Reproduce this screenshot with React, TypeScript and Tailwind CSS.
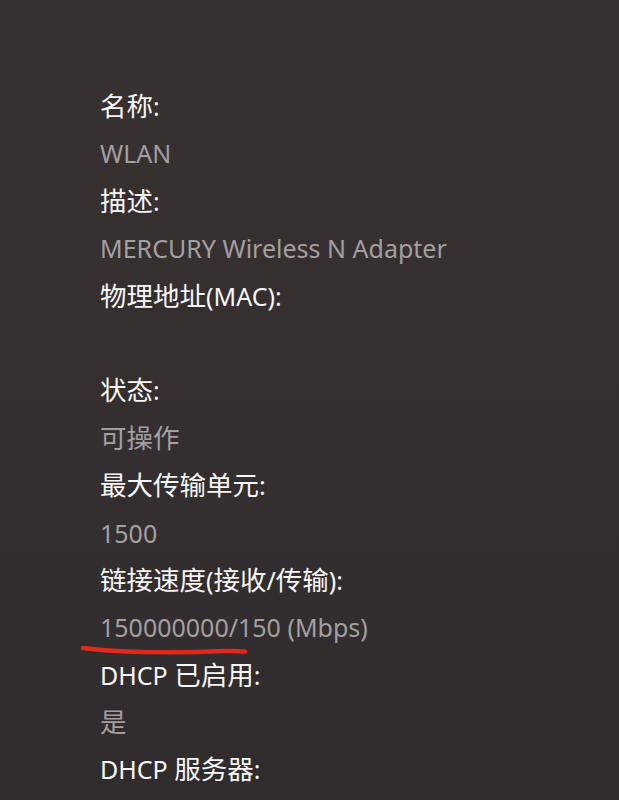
const rows: { text: string; kind: "label" | "value" | "blank" }[] = [
  { text: "名称:", kind: "label" },
  { text: "WLAN", kind: "value" },
  { text: "描述:", kind: "label" },
  { text: "MERCURY Wireless N Adapter", kind: "value" },
  { text: "物理地址(MAC):", kind: "label" },
  { text: "", kind: "blank" },
  { text: "状态:", kind: "label" },
  { text: "可操作", kind: "value" },
  { text: "最大传输单元:", kind: "label" },
  { text: "1500", kind: "value" },
  { text: "链接速度(接收/传输):", kind: "label" },
  { text: "150000000/150 (Mbps)", kind: "value" },
  { text: "DHCP 已启用:", kind: "label" },
  { text: "是", kind: "value" },
  { text: "DHCP 服务器:", kind: "label" },
];

// CJK glyphs in the screenshot run a bit larger than the latin ones
function Runs({ text }: { text: string }) {
  const parts = text.match(/[\u4e00-\u9fff]+|[^\u4e00-\u9fff]+/g) ?? [];
  return (
    <>
      {parts.map((p, i) =>
        /[\u4e00-\u9fff]/.test(p) ? (
          <span key={i} className="text-[26.5px]">
            {p}
          </span>
        ) : (
          <span key={i}>{p}</span>
        )
      )}
    </>
  );
}

export default function App() {
  return (
    <div
      className="h-[800px] w-full overflow-hidden bg-gradient-to-b from-[#383131] to-[#302c2e] pl-[100px] pt-[83px] text-[25px]"
      style={{ fontFamily: '"Noto Sans", "Noto Sans CJK SC", sans-serif' }}
    >
      {rows.map((r, i) => (
        <div
          key={i}
          className={
            "relative h-[47.4px] leading-[47.4px] " +
            (r.kind === "label" ? "text-[#f7f5f5]" : "text-[#a39fa0]")
          }
        >
          <Runs text={r.text} />
          {r.text.startsWith("150000000") && (
            <svg
              className="absolute left-[-20px] top-[36px]"
              width="170"
              height="18"
              viewBox="0 0 170 18"
            >
              <path
                d="M3 8 C 40 13, 100 13, 145 11 C 155 10.6, 162 11.4, 165 11.6"
                stroke="#e0281c"
                strokeWidth="4.5"
                strokeLinecap="round"
                fill="none"
              />
            </svg>
          )}
        </div>
      ))}
    </div>
  );
}
